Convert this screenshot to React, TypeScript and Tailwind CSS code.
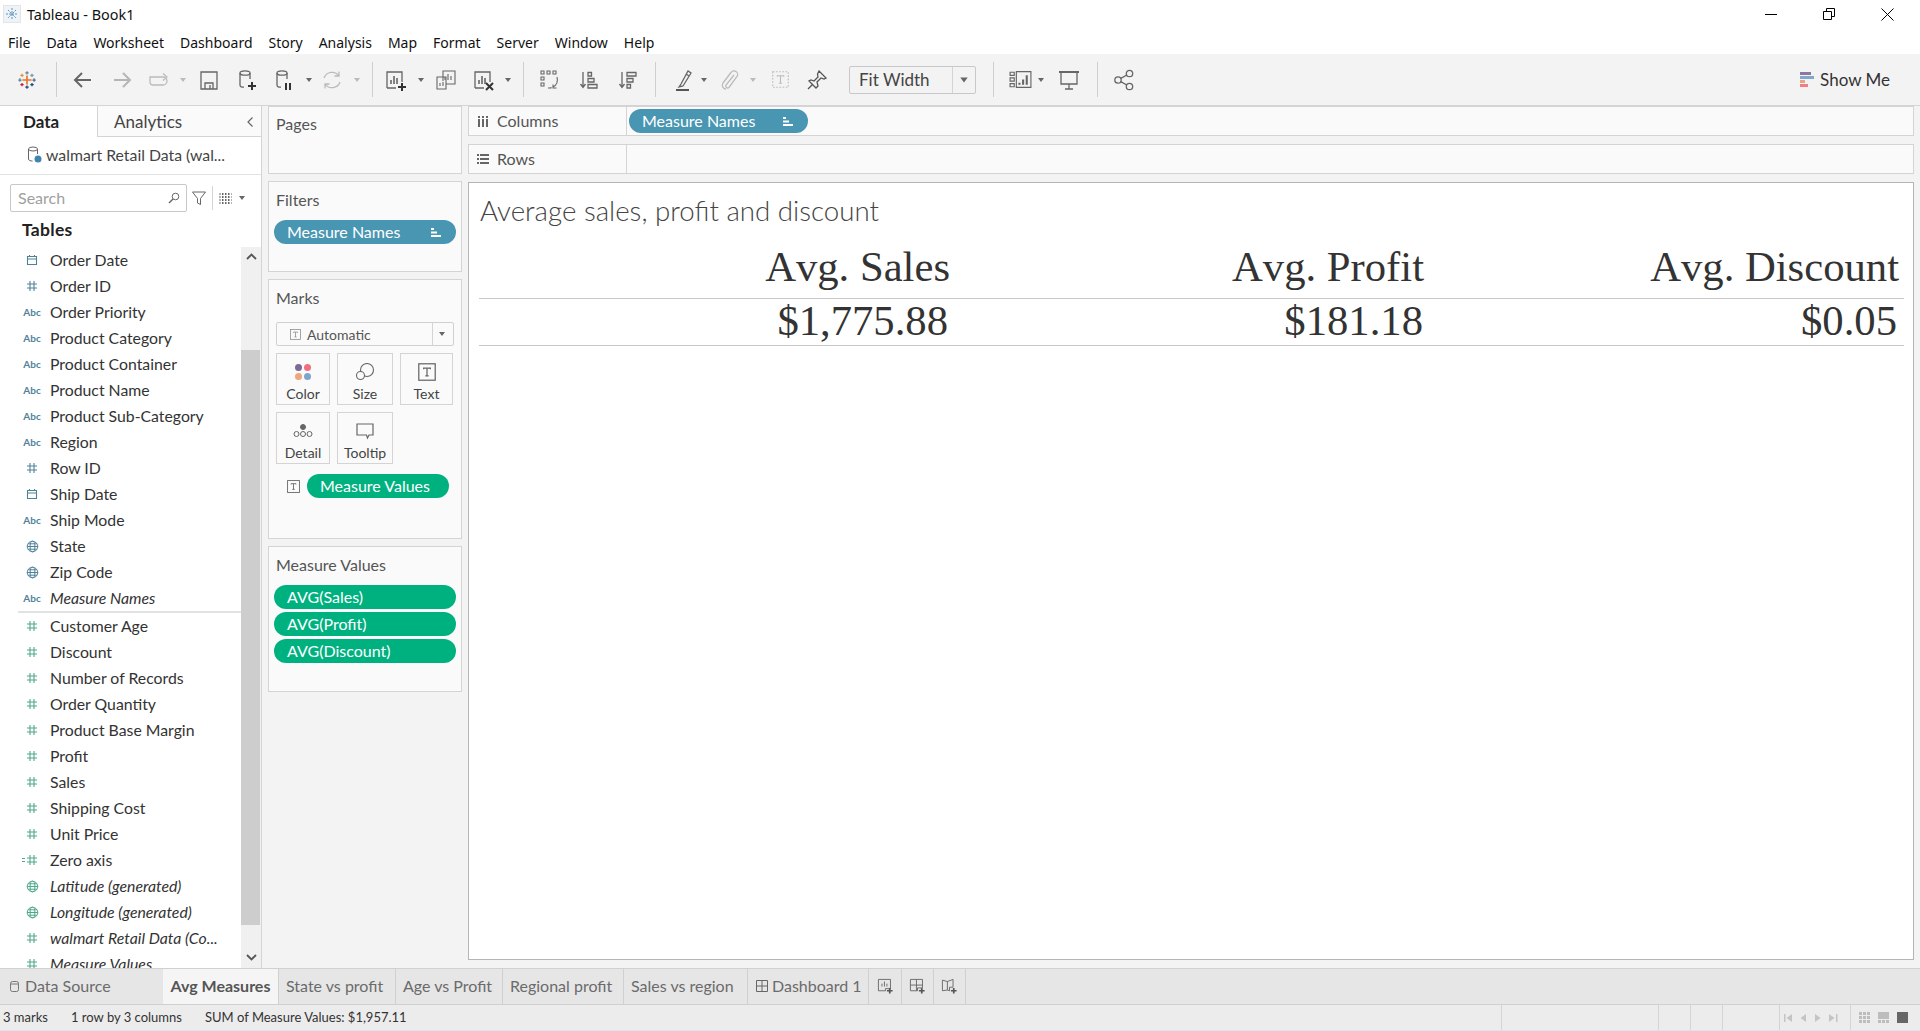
import React from 'react';

const tb = "font-['Lato','Open_Sans',sans-serif]";

const Svg = ({ s = 24, c = '#666', w = 1.3, children, className = '' }: { s?: number; c?: string; w?: number; children: React.ReactNode; className?: string }) => (
  <svg width={s} height={s} viewBox="0 0 24 24" fill="none" stroke={c} strokeWidth={w} className={className}>
    {children}
  </svg>
);

const Sep = ({ className }: { className: string }) => <div className={`h-[35px] w-px shrink-0 bg-[#cfcfcf] ${className}`} />;

const Tool = ({ className, children }: { className: string; children: React.ReactNode }) => (
  <div className={`flex h-[26px] w-[26px] shrink-0 items-center justify-center ${className}`}>{children}</div>
);

const Caret = ({ className, light }: { className: string; light?: boolean }) => (
  <div className={`flex w-[10px] shrink-0 justify-center ${className}`}>
    <div className={`h-0 w-0 border-x-[3.5px] border-t-[4px] border-x-transparent ${light ? 'border-t-[#bbbbbb]' : 'border-t-[#666666]'}`} />
  </div>
);

const TableauLogo = ({ size = 24 }: { size?: number }) => (
  <svg width={size} height={size} viewBox="0 0 24 24" fill="none" strokeWidth="1.5">
    <path d="M12 6.5v11M6.5 12h11" stroke="#e8762b" strokeWidth="2" />
    <path d="M12 1.5v4M10 3.5h4" stroke="#5b879b" />
    <path d="M12 18.5v4M10 20.5h4" stroke="#1f447a" />
    <path d="M1.5 12h4M3.5 10v4" stroke="#59879b" />
    <path d="M18.5 12h4M20.5 10v4" stroke="#5b6591" />
    <path d="M6 4.5v4M4 6.5h4" stroke="#eb912b" />
    <path d="M18 4.5v4M16 6.5h4" stroke="#7099a6" />
    <path d="M6 15.5v4M4 17.5h4" stroke="#c72037" />
    <path d="M18 15.5v4M16 17.5h4" stroke="#1f447a" />
  </svg>
);

const Cylinder = ({ c = '#666' }: { c?: string }) => (
  <>
    <ellipse cx="9" cy="5" rx="5" ry="2.2" stroke={c} />
    <path d="M4 5v12c0 1.5 2 2.2 4 2.2M14 5v6" stroke={c} />
  </>
);

const SheetBars = () => (
  <>
    <path d="M3 20V4h15v10M3 20h9" />
    <path d="M7 16v-4M10 16V8M13 16v-6" strokeWidth="1.6" />
  </>
);

const SortBars = ({ flip }: { flip?: boolean }) => (
  <>
    <path d="M6 4v15M3.5 16l2.5 3.5L8.500 16" />
    {flip ? (
      <path d="M11 4.500h9v3.500h-9zM11 10.500h6v3.500h-6zM11 16.500h3.500v3.500h-3.500z" />
    ) : (
      <path d="M11 4.500h3.500v3.500h-3.500zM11 10.500h6v3.500h-6zM11 16.500h9v3.500h-9z" />
    )}
  </>
);

const Hash = ({ c }: { c: string }) => (
  <svg width="12" height="12" viewBox="0 0 12 12" fill="none" stroke={c} strokeWidth="1.1">
    <path d="M4 1v10M8 1v10M1 4h10M1 8h10" />
  </svg>
);

const Calendar = ({ c }: { c: string }) => (
  <svg width="12" height="12" viewBox="0 0 12 12" fill="none" stroke={c} strokeWidth="1.1">
    <path d="M1.500 2.500h9v8h-9zM1.500 5h9M3.500 1v2M8.500 1v2" />
  </svg>
);

const Globe = ({ c }: { c: string }) => (
  <svg width="13" height="13" viewBox="0 0 13 13" fill="none" stroke={c} strokeWidth="1">
    <circle cx="6.500" cy="6.500" r="5.300" />
    <ellipse cx="6.500" cy="6.500" rx="2.400" ry="5.300" />
    <path d="M1.200 6.500h10.600M2 3.800h9M2 9.200h9" />
  </svg>
);

const blue = '#4f8299';
const green = '#4fa987';

type FieldKind = 'date' | 'hash' | 'abc' | 'globe' | 'axis';

const FieldIcon = ({ kind, c }: { kind: FieldKind; c: string }) => {
  if (kind === 'date') return <Calendar c={c} />;
  if (kind === 'hash') return <Hash c={c} />;
  if (kind === 'globe') return <Globe c={c} />;
  if (kind === 'axis')
    return (
      <span className="relative flex">
        <span className="absolute left-[-4px] top-[4px] h-[4px] w-[3px] border-y border-[#4fa987]" />
        <Hash c={c} />
      </span>
    );
  return <span className="text-[10px] font-bold leading-none" style={{ color: c }}>Abc</span>;
};

const dims: [string, FieldKind, boolean?][] = [
  ['Order Date', 'date'],
  ['Order ID', 'hash'],
  ['Order Priority', 'abc'],
  ['Product Category', 'abc'],
  ['Product Container', 'abc'],
  ['Product Name', 'abc'],
  ['Product Sub-Category', 'abc'],
  ['Region', 'abc'],
  ['Row ID', 'hash'],
  ['Ship Date', 'date'],
  ['Ship Mode', 'abc'],
  ['State', 'globe'],
  ['Zip Code', 'globe'],
  ['Measure Names', 'abc', true],
];

const measures: [string, FieldKind, boolean?][] = [
  ['Customer Age', 'hash'],
  ['Discount', 'hash'],
  ['Number of Records', 'hash'],
  ['Order Quantity', 'hash'],
  ['Product Base Margin', 'hash'],
  ['Profit', 'hash'],
  ['Sales', 'hash'],
  ['Shipping Cost', 'hash'],
  ['Unit Price', 'hash'],
  ['Zero axis', 'axis'],
  ['Latitude (generated)', 'globe', true],
  ['Longitude (generated)', 'globe', true],
  ['walmart Retail Data (Co...', 'hash', true],
  ['Measure Values', 'hash', true],
];

const FieldRow = ({ name, kind, italic, c }: { name: string; kind: FieldKind; italic?: boolean; c: string }) => (
  <div className="flex h-[26px] shrink-0 items-center">
    <div className="flex w-[50px] shrink-0 justify-center pl-[14px]">
      <FieldIcon kind={kind} c={c} />
    </div>
    <span className={`whitespace-nowrap text-[15.8px] text-[#333333] ${italic ? 'italic' : ''}`}>{name}</span>
  </div>
);

const Pill = ({ label, color, className, sort }: { label: string; color: 'blue' | 'green'; className: string; sort?: boolean }) => (
  <div className={`flex h-[24px] items-center rounded-full pl-[13px] pr-[14px] text-[16px] text-white ${color === 'blue' ? 'bg-[#4996b2]' : 'bg-[#00b180]'} ${className}`}>
    <span className="whitespace-nowrap">{label}</span>
    {sort && (
      <svg width="11" height="9" viewBox="0 0 11 9" fill="#fff" className="ml-auto">
        <path d="M0 0h3v2H0zM0 3.500h6v2H0zM0 7h10v2H0z" />
      </svg>
    )}
  </div>
);

const Card = ({ label, className, labelClass = 'h-[36px]', children }: { label: string; className: string; labelClass?: string; children?: React.ReactNode }) => (
  <div className={`shrink-0 border border-[#d4d4d4] bg-[#fafafa] ${className}`}>
    <div className={`flex items-center pl-[7px] text-[16px] text-[#555555] ${labelClass}`}>{label}</div>
    {children}
  </div>
);

const MarkBtn = ({ label, children }: { label: string; children: React.ReactNode }) => (
  <div className="flex h-[52px] flex-col items-center border border-[#d4d4d4] pt-[6px] text-[14px] leading-[17px] text-[#444444]">
    <div className="flex h-[24px] items-center justify-center">{children}</div>
    <span className="mt-[1px]">{label}</span>
  </div>
);

const TIcon = ({ size = 13, dashed, c = '#666' }: { size?: number; dashed?: boolean; c?: string }) => (
  <svg width={size} height={size} viewBox="0 0 16 16" fill="none" stroke={c} strokeWidth="1.1" strokeDasharray={dashed ? '1.500 1.500' : undefined}>
    <rect x="0.700" y="0.700" width="14.600" height="14.600" />
    <path d="M5 5.500V4.500h6v1M8 4.500v7M6.500 11.500h3" strokeDasharray="none" />
  </svg>
);

const Shelf = ({ label, icon, children }: { label: string; icon: React.ReactNode; children?: React.ReactNode }) => (
  <div className="flex h-[30px] shrink-0 border border-[#d4d4d4] bg-[#fafafa]">
    <div className="flex w-[158px] shrink-0 items-center border-r border-[#d4d4d4]">
      <div className="flex w-[28px] justify-center">{icon}</div>
      <span className="text-[16px] text-[#555555]">{label}</span>
    </div>
    <div className="flex items-center pl-[2px]">{children}</div>
  </div>
);

const Tab = ({ className, label, active, children }: { className: string; label?: string; active?: boolean; children?: React.ReactNode }) => (
  <div className={`flex h-full shrink-0 items-center border-r border-[#d0d0d0] pb-[1px] text-[16px] ${active ? 'justify-center bg-[#f5f5f5] font-bold text-[#555555]' : 'text-[#6b6b6b]'} ${className}`}>
    {children}
    {label && <span className="whitespace-nowrap">{label}</span>}
  </div>
);

const menus = ['File', 'Data', 'Worksheet', 'Dashboard', 'Story', 'Analysis', 'Map', 'Format', 'Server', 'Window', 'Help'];

export default function App() {
  return (
    <div className={`flex h-[1031px] w-[1920px] flex-col overflow-hidden bg-white ${tb}`}>
      {/* title bar */}
      <div className="flex h-[28px] shrink-0 items-center font-['Noto_Sans',sans-serif] text-[14.4px] text-[#111111]">
        <div className="ml-[3px] flex h-[18px] w-[18px] items-center justify-center border border-[#e4e4e4] bg-[#eef3f7]">
          <svg width="16" height="16" viewBox="0 0 16 16" stroke="#5f93bd" strokeWidth="1" fill="none">
            <path d="M8 2v12M2 8h12M4 4l8 8M12 4l-8 8" strokeDasharray="2 1" />
          </svg>
        </div>
        <span className="ml-[6px] pt-[1px]">Tableau - Book1</span>
        <div className="ml-auto flex pr-[3px]">
          <div className="flex h-[28px] w-[58px] items-center justify-center">
            <div className="h-px w-[12px] bg-black" />
          </div>
          <div className="flex h-[28px] w-[58px] items-center justify-center">
            <svg width="12" height="12" viewBox="0 0 12 12" fill="none" stroke="#000">
              <path d="M.500 3.500h8v8h-8zM3.500 3.500v-3h8v8h-3" />
            </svg>
          </div>
          <div className="flex h-[28px] w-[59px] items-center justify-center">
            <svg width="13" height="13" viewBox="0 0 13 13" fill="none" stroke="#000">
              <path d="M.500.500l12 12M12.500.500l-12 12" />
            </svg>
          </div>
        </div>
      </div>
      {/* menu */}
      <div className="flex h-[26px] shrink-0 items-center gap-[16px] pl-[8px] pt-[2px] font-['Noto_Sans',sans-serif] text-[14px] text-[#111111]">
        {menus.map((m) => (
          <span key={m}>{m}</span>
        ))}
      </div>
      {/* toolbar */}
      <div className="flex h-[51px] shrink-0 items-center bg-[#f3f3f3]">
        <Tool className="ml-[14px]"><TableauLogo size={20} /></Tool>
        <Sep className="ml-[16px]" />
        <Tool className="ml-[13px]"><Svg w={2}><path d="M20 12H5M11 5l-7 7 7 7" /></Svg></Tool>
        <Tool className="ml-[13px]"><Svg c="#b5b5b5" w={2}><path d="M4 12h15M13 5l7 7-7 7" /></Svg></Tool>
        <Tool className="ml-[11px]"><Svg c="#bbbbbb"><path d="M3 9h13a4 4 0 010 8H6a3 3 0 01-3-3V9zM16 5.500L20 9l-4 3.500" /></Svg></Tool>
        <Caret className="ml-[6px]" light />
        <Tool className="ml-[8px]"><Svg><path d="M4 4h16v17H4zM8 21v-6h8v6M13 21v-4" /></Svg></Tool>
        <Tool className="ml-[13px]"><Svg><Cylinder /><path d="M16 14v8M12 18h8" stroke="#333" strokeWidth="2" /></Svg></Tool>
        <Tool className="ml-[11px]"><Svg><Cylinder /><path d="M13 15v7M17 15v7" stroke="#333" strokeWidth="2" /></Svg></Tool>
        <Caret className="ml-[6px]" />
        <Tool className="ml-[5px]"><Svg c="#bbbbbb"><path d="M4 10a8.500 8.500 0 0115-2M20 14a8.500 8.500 0 01-15 2M19 3.500V8h-4.500M5 20.500V16h4.500" /></Svg></Tool>
        <Caret className="ml-[7px]" light />
        <Sep className="ml-[10px]" />
        <Tool className="ml-[10px]"><Svg><SheetBars /><path d="M18 15v8M14 19h8" stroke="#333" strokeWidth="2" /></Svg></Tool>
        <Caret className="ml-[7px]" />
        <Tool className="ml-[7px]"><Svg w={1.1}><path d="M9 13V3h12v13H12M11 12V9M14 12V6M17 12V8" /><path d="M3 9h9v12H3zM6 18v-3M9 18v-4" /></Svg></Tool>
        <Tool className="ml-[12px]"><Svg><SheetBars /><path d="M14 15l7 7M21 15l-7 7" stroke="#333" strokeWidth="2" /></Svg></Tool>
        <Caret className="ml-[6px]" />
        <Sep className="ml-[10px]" />
        <Tool className="ml-[12px]"><Svg w={1.1}><path d="M4 3h3v3H4zM10 3h3v3h-3zM16 3h3v3h-3zM4 9h3v3H4zM4 15h3v3H4zM11 20h3v-1M20 9c1 4 0 8-4 10M16 16.500V20h3.500" /></Svg></Tool>
        <Tool className="ml-[14px]"><Svg><SortBars /></Svg></Tool>
        <Tool className="ml-[13px]"><Svg><SortBars flip /></Svg></Tool>
        <Sep className="ml-[14px]" />
        <Tool className="ml-[14px]"><Svg><path d="M10 16l-2 3 4-1 8-13-3-2zM15 6l3 2" /><path d="M5 22h13" stroke="#555" strokeWidth="2" /></Svg></Tool>
        <Caret className="ml-[3px]" />
        <Tool className="ml-[7px]"><Svg c="#bbbbbb"><path d="M17 7l-8 10a2 2 0 003 2.500l8-11a3.500 3.500 0 00-6-4L6 15c-2 3 .5 6 3 6" /></Svg></Tool>
        <Caret className="ml-[6px]" light />
        <Tool className="ml-[9px]"><TIcon size={17} dashed c="#bbbbbb" /></Tool>
        <Tool className="ml-[11px]"><Svg c="#555"><path d="M14 3l7 7-2 1-3-1-4 4 1 4-2 2-7-7 2-1 3 1 4-4-.500-3zM8 16l-5 5" /></Svg></Tool>
        <div className="ml-[19px] flex h-[28px] w-[127px] shrink-0 items-center rounded-[2px] border border-[#c8c8c8] text-[17px] text-[#444444]">
          <span className="w-[103px] border-r border-[#d4d4d4] pl-[9px] leading-[26px]">Fit Width</span>
          <Caret className="ml-[6px] scale-125" />
        </div>
        <Sep className="ml-[17px]" />
        <Tool className="ml-[13px]"><Svg w={1.1} s={25}><path d="M2 5h4v3H2zM2 10.500h4v3H2zM2 16h4v3H2zM8 4.500h14v15H8z" /><path d="M11 17v-2M14.500 17v-5M18 17V8" strokeWidth="2" /></Svg></Tool>
        <Caret className="ml-[3px]" />
        <Tool className="ml-[10px]"><Svg><path d="M2 4h20" strokeWidth="2" /><path d="M4 4v12h16V4M12 16v5M8 21h8" /></Svg></Tool>
        <Sep className="ml-[15px]" />
        <Tool className="ml-[13px]"><Svg><circle cx="6" cy="12" r="3.200" /><circle cx="17.500" cy="5.500" r="3.200" /><circle cx="17.500" cy="18.500" r="3.200" /><path d="M8.800 10.400l6-3.400M8.800 13.600l6 3.400" /></Svg></Tool>
        <div className="ml-auto flex items-center pr-[30px]">
          <svg width="14" height="16" viewBox="0 0 14 16" className="mr-[6px]">
            <rect width="11" height="3" fill="#8d779f" />
            <rect y="4" width="14" height="3" fill="#82a7cf" />
            <rect y="8" width="5" height="3" fill="#eaa67a" />
            <rect y="12" width="8" height="3" fill="#f27d88" />
          </svg>
          <span className="text-[17px] text-[#333333]">Show Me</span>
        </div>
      </div>
      {/* main */}
      <div className="flex min-h-0 flex-1 border-t border-[#d4d4d4] bg-[#f3f3f3]">
        {/* data pane */}
        <div className="flex h-full w-[262px] shrink-0 flex-col border-r border-[#d4d4d4] bg-white">
          <div className="flex h-[31px] shrink-0">
            <div className="flex w-[97px] items-center pl-[23px] text-[17px] font-bold text-[#222222]">Data</div>
            <div className="flex flex-1 items-center border-b border-l border-[#d4d4d4] bg-[#fafafa] pl-[16px] pt-[1px] text-[17px] text-[#444444]">
              Analytics
              <svg width="8" height="12" viewBox="0 0 8 12" fill="none" stroke="#666" strokeWidth="1.2" className="ml-auto mr-[7px]">
                <path d="M6.500 1.500L2 6l4.500 4.500" />
              </svg>
            </div>
          </div>
          <div className="flex h-[38px] shrink-0 items-center border-b border-[#e2e2e2] pb-[1px] pl-[27px]">
            <svg width="15" height="18" viewBox="0 0 15 18" fill="none" stroke="#666" strokeWidth="1">
              <ellipse cx="6" cy="3" rx="4.500" ry="2" />
              <path d="M1.500 3v10c0 1.500 2 2 4 2M10.500 3v5" />
              <circle cx="11" cy="13" r="3.500" fill="#3d86ad" stroke="none" />
            </svg>
            <span className="ml-[4px] whitespace-nowrap text-[15.8px] text-[#444444]">walmart Retail Data (wal...</span>
          </div>
          <div className="mt-[9px] flex shrink-0 items-center pl-[10px]">
            <div className="flex h-[28px] w-[177px] items-center rounded-[2px] border border-[#c8c8c8] pb-[1px] pl-[7px] text-[16px] text-[#a0a0a0]">
              Search
              <svg width="12" height="12" viewBox="0 0 12 12" fill="none" stroke="#666" className="ml-auto mr-[6px]">
                <circle cx="7.500" cy="4.500" r="3.300" />
                <path d="M5 7l-4 4" strokeWidth="1.400" />
              </svg>
            </div>
            <svg width="14" height="14" viewBox="0 0 14 14" fill="none" stroke="#666" className="ml-[5px]">
              <path d="M.500 1h13L8.500 7.500v6l-3-1.500V7.500z" />
            </svg>
            <div className="ml-[6px] h-[24px] w-px bg-[#d4d4d4]" />
            <svg width="13" height="11" viewBox="0 0 13 11" stroke="#666" strokeWidth="1" className="ml-[6px]">
              <path d="M0 1h13M0 4h13M0 7h13M0 10h13M3.500 0v11M6.500 0v11M9.500 0v11" strokeDasharray="2 1" />
            </svg>
            <Caret className="ml-[5px]" />
          </div>
          <div className="flex h-[35px] shrink-0 items-center pl-[22px] pt-[1px] text-[17.5px] font-bold tracking-[0.3px] text-[#222222]">Tables</div>
          <div className="flex min-h-0 flex-1">
            <div className="min-w-0 flex-1 overflow-hidden">
              {dims.map(([n, k, i]) => (
                <FieldRow key={n} name={n} kind={k} italic={i} c={blue} />
              ))}
              <div className="ml-[18px] h-[2px] bg-[#e2e2e2]" />
              {measures.map(([n, k, i]) => (
                <FieldRow key={n} name={n} kind={k} italic={i} c={green} />
              ))}
            </div>
            <div className="flex w-[20px] shrink-0 flex-col bg-[#f0f0f0]">
              <div className="flex h-[103px] shrink-0 justify-center pt-[6px]">
                <svg width="11" height="7" viewBox="0 0 11 7" fill="none" stroke="#555" strokeWidth="1.800">
                  <path d="M1 6l4.500-4.500L10 6" />
                </svg>
              </div>
              <div className="mr-[1px] h-[575px] shrink-0 bg-[#cdcdcd]" />
              <div className="flex flex-1 items-end justify-center pb-[7px]">
                <svg width="11" height="7" viewBox="0 0 11 7" fill="none" stroke="#555" strokeWidth="1.800">
                  <path d="M1 1l4.500 4.500L10 1" />
                </svg>
              </div>
            </div>
          </div>
        </div>
        {/* cards */}
        <div className="ml-[6px] flex w-[194px] shrink-0 flex-col gap-[7px]">
          <Card label="Pages" className="h-[68px]" labelClass="h-[34px]" />
          <Card label="Filters" className="h-[91px]">
            <Pill label="Measure Names" color="blue" sort className="mx-[5px] mt-[2px]" />
          </Card>
          <Card label="Marks" className="h-[260px]">
            <div className="mx-[7px] mt-[6px] flex h-[24px] items-center rounded-[2px] border border-[#d0d0d0] text-[14px] text-[#555555]">
              <span className="ml-[13px]"><TIcon size={11} c="#888" /></span>
              <span className="ml-[6px] w-[125px]">Automatic</span>
              <span className="h-full w-px bg-[#d4d4d4]" />
              <Caret className="ml-[4px]" />
            </div>
            <div className="mx-[7px] mt-[7px] grid grid-cols-[54px_56px_53px] gap-[7px]">
              <MarkBtn label="Color">
                <div className="grid grid-cols-2 gap-[2px]">
                  <span className="h-[7px] w-[7px] rounded-full bg-[#7c6a94]" />
                  <span className="h-[7px] w-[7px] rounded-full bg-[#f0707f]" />
                  <span className="h-[7px] w-[7px] rounded-full bg-[#f0a77d]" />
                  <span className="h-[7px] w-[7px] rounded-full bg-[#7fa5cf]" />
                </div>
              </MarkBtn>
              <MarkBtn label="Size">
                <svg width="20" height="18" viewBox="0 0 20 18" fill="none" stroke="#666" strokeWidth="1.100">
                  <circle cx="12" cy="7" r="6.500" />
                  <circle cx="5.500" cy="12.500" r="4" fill="#fafafa" />
                </svg>
              </MarkBtn>
              <MarkBtn label="Text"><TIcon size={18} /></MarkBtn>
              <MarkBtn label="Detail">
                <svg width="20" height="16" viewBox="0 0 20 16" fill="none" stroke="#666" strokeWidth="1">
                  <circle cx="10" cy="4" r="2.500" fill="#666" />
                  <circle cx="3.500" cy="11" r="2.500" />
                  <circle cx="10" cy="11" r="2.500" />
                  <circle cx="16.500" cy="11" r="2.500" />
                </svg>
              </MarkBtn>
              <MarkBtn label="Tooltip">
                <svg width="18" height="17" viewBox="0 0 18 17" fill="none" stroke="#666" strokeWidth="1.200">
                  <path d="M1 1h16v11h-4l-1.500 3-1-3H1z" />
                </svg>
              </MarkBtn>
            </div>
            <div className="mt-[10px] flex items-center">
              <span className="ml-[18px]"><TIcon size={13} /></span>
              <Pill label="Measure Values" color="green" className="ml-[7px] w-[142px]" />
            </div>
          </Card>
          <Card label="Measure Values" className="h-[146px]">
            <div className="mx-[5px] mt-[2px] flex flex-col gap-[3px]">
              <Pill label="AVG(Sales)" color="green" />
              <Pill label="AVG(Profit)" color="green" />
              <Pill label="AVG(Discount)" color="green" />
            </div>
          </Card>
        </div>
        {/* shelves and view */}
        <div className="ml-[6px] flex w-[1446px] shrink-0 flex-col gap-[8px]">
          <Shelf
            label="Columns"
            icon={
              <svg width="10" height="11" viewBox="0 0 10 11" fill="#666">
                <path d="M0 0h2v2H0zM4 0h2v2H4zM8 0h2v2H8zM0 3h2v8H0zM4 3h2v8H4zM8 3h2v8H8z" />
              </svg>
            }
          >
            <Pill label="Measure Names" color="blue" sort className="w-[179px]" />
          </Shelf>
          <Shelf
            label="Rows"
            icon={
              <svg width="12" height="10" viewBox="0 0 12 10" fill="#666">
                <path d="M0 0h2v2H0zM3 0h9v2H3zM0 4h2v2H0zM3 4h9v2H3zM0 8h2v2H0zM3 8h9v2H3z" />
              </svg>
            }
          />
          <div className="h-[778px] shrink-0 border border-[#b5b5b5] bg-white pl-[10px] pr-[9px]">
            <div className="flex h-[54px] items-end pb-[11px] pl-[1px] text-[27.7px] font-light leading-[30px] text-[#444444]">
              Average sales, profit and discount
            </div>
            <div className="grid h-[62px] grid-cols-3 items-center border-b border-[#c8c8c8] font-['Liberation_Serif',serif] text-[42.67px] leading-none text-[#333333] [font-kerning:none]">
              <div className="pr-[4px] text-right">Avg. Sales</div>
              <div className="pr-[5px] text-right">Avg. Profit</div>
              <div className="pr-[5px] text-right">Avg. Discount</div>
            </div>
            <div className="grid h-[47px] grid-cols-3 items-center border-b border-[#c8c8c8] pb-[2px] font-['Liberation_Serif',serif] text-[42.67px] leading-none text-[#333333]">
              <div className="pr-[6px] text-right">$1,775.88</div>
              <div className="pr-[6px] text-right">$181.18</div>
              <div className="pr-[7px] text-right">$0.05</div>
            </div>
          </div>
        </div>
      </div>
      {/* sheet tabs */}
      <div className="flex h-[37px] shrink-0 border-y border-[#d0d0d0] bg-[#e6e6e6]">
        <Tab className="w-[163px] border-r-0 pl-[10px]" label="Data Source">
          <svg width="9" height="11" viewBox="0 0 9 11" fill="none" stroke="#777" className="mr-[6px]">
            <rect x=".500" y=".500" width="8" height="10" rx="2" />
            <path d="M.500 3h8" />
          </svg>
        </Tab>
        <Tab className="w-[116px]" label="Avg Measures" active />
        <Tab className="w-[117px] pl-[7px]" label="State vs profit" />
        <Tab className="w-[107px] pl-[7px]" label="Age vs Profit" />
        <Tab className="w-[121px] pl-[7px]" label="Regional profit" />
        <Tab className="w-[124px] pl-[7px]" label="Sales vs region" />
        <Tab className="w-[121px] pl-[8px]" label="Dashboard 1">
          <svg width="12" height="12" viewBox="0 0 12 12" fill="none" stroke="#666" className="mr-[4px]">
            <path d="M.500.500h11v11H.500zM6 .500v11M.500 6h11" />
          </svg>
        </Tab>
        <Tab className="w-[33px] justify-center">
          <Svg s={17}><path d="M2 2h17v13H12v3H2zM7 12V8M10.500 12V5M14 12V8" /><path d="M18 14v8M14 18h8" stroke="#555" strokeWidth="2.400" /></Svg>
        </Tab>
        <Tab className="w-[32px] justify-center">
          <Svg s={17}><path d="M2 2h17v12h-7v4H2zM10.500 2v16M2 10h17" /><path d="M18 14v8M14 18h8" stroke="#555" strokeWidth="2.400" /></Svg>
        </Tab>
        <Tab className="w-[32px] justify-center">
          <Svg s={17}><path d="M2 3l7 2 8-3v11h-5v5l-3-1-7 1zM9 5v12" /><path d="M18 14v8M14 18h8" stroke="#555" strokeWidth="2.400" /></Svg>
        </Tab>
      </div>
      {/* status bar */}
      <div className="flex h-[26px] shrink-0 items-center border-b border-[#dde3ee] bg-[#ececec] text-[13px] text-[#333333]">
        <span className="ml-[3px] w-[68px]">3 marks</span>
        <span className="w-[134px]">1 row by 3 columns</span>
        <span>SUM of Measure Values: $1,957.11</span>
        <div className="ml-auto flex h-full">
          <div className="w-[157px] border-l border-[#d4d4d4]" />
          <div className="w-[32px] border-l border-[#d4d4d4]" />
          <div className="w-[32px] border-l border-[#d4d4d4]" />
          <div className="w-[57px] border-l border-[#d4d4d4]" />
          <div className="flex w-[71px] items-center justify-center gap-[8px] border-l border-[#d4d4d4]">
            <svg width="62" height="10" viewBox="0 0 62 10" fill="#c4c4c4">
              <path d="M0 1h1.500v8H0zM8 1v8L2.500 5zM22 1v8l-5.500-4zM31 1l5.500 4-5.500 4zM45 1l5.500 4L45 9zM52 1h1.500v8H52z" />
            </svg>
          </div>
          <div className="flex w-[70px] items-center gap-[8px] border-l border-[#d4d4d4] pl-[8px]">
            <svg width="11" height="11" viewBox="0 0 11 11" fill="#bdbdbd">
              <path d="M0 0h3v3H0zM4 0h3v3H4zM8 0h3v3H8zM0 4h3v3H0zM4 4h3v3H4zM8 4h3v3H8zM0 8h3v3H0zM4 8h3v3H4zM8 8h3v3H8z" />
            </svg>
            <svg width="11" height="11" viewBox="0 0 11 11" fill="#bdbdbd">
              <path d="M0 0h11v7H0zM0 8h3v3H0zM4 8h3v3H4zM8 8h3v3H8z" />
            </svg>
            <div className="h-[11px] w-[11px] bg-[#666666]" />
          </div>
        </div>
      </div>
    </div>
  );
}
